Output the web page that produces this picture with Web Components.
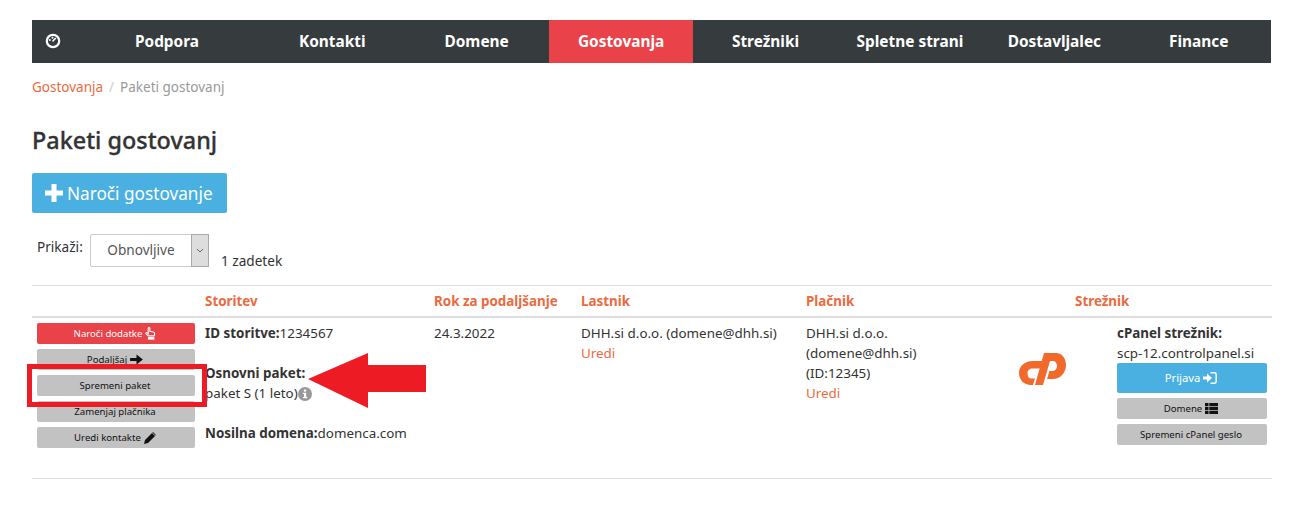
<!DOCTYPE html>
<html lang="sl">
<head>
<meta charset="utf-8">
<title>Paketi gostovanj</title>
<style>
html, body { margin: 0; background: #fff; }
body { font-family: "Noto Sans", "Open Sans", sans-serif; color: #333; position: relative; height: 508px; overflow: hidden; }
.page { padding: 20px 42px 0 32px; }
</style>
</head>
<body>
<div class="page">
  <top-nav></top-nav>
  <bread-crumbs></bread-crumbs>
  <page-title>Paketi gostovanj</page-title>
  <action-bar></action-bar>
  <hosting-table></hosting-table>
</div>
<mark-up></mark-up>

<script>
const ICONS = {
  gauge: '<svg viewBox="0 0 16 16" width="16" height="16"><circle cx="8" cy="8" r="6.2" fill="none" stroke="currentColor" stroke-width="2.2"/><path d="M7.500 8.500 10.800 5" stroke="currentColor" stroke-width="1.500" fill="none"/><circle cx="4.800" cy="7" r="1" fill="currentColor"/><circle cx="7.500" cy="4.700" r="1" fill="currentColor"/></svg>',
  plus: '<svg viewBox="0 0 18 18" width="18" height="18"><path d="M6.500 0h5v6.500H18v5h-6.500V18h-5v-6.500H0v-5h6.500z" fill="currentColor"/></svg>',
  hand: '<svg viewBox="0 0 12 14" width="11" height="13"><path d="M3.500 1.500c0-1.200 1.800-1.200 1.800 0v3l3.800.8c1 .2 1.500.9 1.400 1.800l-.4 2.400H3.500L1.200 7.300c-.7-.9.500-1.900 1.300-1.100l1 1z" fill="none" stroke="currentColor" stroke-width="1.200"/><rect x="3.200" y="10.500" width="7" height="3.200" fill="currentColor"/></svg>',
  arrow: '<svg viewBox="0 0 14 12" width="13" height="11"><path d="M0 4.300h7V.5L14 6l-7 5.500V7.700H0z" fill="currentColor"/></svg>',
  pencil: '<svg viewBox="0 0 12 12" width="12" height="12"><path d="M0 12l1-4L8 1l3 3-7 7zM9 0l3 3-.6.600-3-3z" fill="currentColor"/></svg>',
  login: '<svg viewBox="0 0 14 12" width="14" height="12"><path d="M0 4.500h4V1.500L9 6l-5 4.500v-3H0z" fill="currentColor"/><path d="M7.500.8h4c1 0 1.700.7 1.700 1.700v7c0 1-.7 1.700-1.700 1.700h-4" fill="none" stroke="currentColor" stroke-width="1.500"/></svg>',
  list: '<svg viewBox="0 0 13 11" width="13" height="11"><path d="M0 0h3.500v3.200H0zM4.300 0H13v3.200H4.300zM0 3.900h3.500v3.200H0zM4.300 3.900H13v3.200H4.300zM0 7.800h3.500V11H0zM4.300 7.800H13V11H4.300z" fill="currentColor"/></svg>',
  info: '<svg viewBox="0 0 14 14" width="14" height="14"><circle cx="7" cy="7" r="7" fill="#999"/><rect x="5.900" y="2.500" width="2.300" height="2.100" fill="#fff"/><path d="M5 5.800h3.200v4.200H9.200v1.300H5V10h1V7.100H5z" fill="#fff"/></svg>'
};

class AppIcon extends HTMLElement {
  constructor() {
    super();
    this.attachShadow({ mode: 'open' }).innerHTML = `
      <style>:host { display: inline-flex; vertical-align: middle; } svg { display: block; }</style>
      ${ICONS[this.getAttribute('name')] || ''}`;
  }
}
customElements.define('app-icon', AppIcon);

class TopNav extends HTMLElement {
  constructor() {
    super();
    const items = ['Podpora', 'Kontakti', 'Domene', 'Gostovanja', 'Strežniki', 'Spletne strani', 'Dostavljalec', 'Finance'];
    this.attachShadow({ mode: 'open' }).innerHTML = `
      <style>
      :host { display: grid; grid-template-columns: 42px 186px repeat(7, 1fr); height: 43px; background: #363b3e; color: #fff; font-size: 15.400px; font-weight: 700; }
      a { display: flex; align-items: center; justify-content: center; padding-bottom: 1px; }
      .active { background: #e94249; }
      </style>
      <a><app-icon name="gauge"></app-icon></a>
      ${items.map(t => `<a class="${t === 'Gostovanja' ? 'active' : ''}">${t}</a>`).join('')}`;
  }
}
customElements.define('top-nav', TopNav);

class BreadCrumbs extends HTMLElement {
  constructor() {
    super();
    this.attachShadow({ mode: 'open' }).innerHTML = `
      <style>
      :host { display: flex; gap: 6px; margin-top: 14px; height: 20px; line-height: 20px; font-size: 13.500px; color: #999; }
      a { color: #ec6a3e; }
      i { font-style: normal; color: #ccc; }
      </style>
      <a>Gostovanja</a><i>/</i><span>Paketi gostovanj</span>`;
  }
}
customElements.define('bread-crumbs', BreadCrumbs);

class PageTitle extends HTMLElement {
  constructor() {
    super();
    this.attachShadow({ mode: 'open' }).innerHTML = `
      <style>:host { display: block; margin-top: 26px; height: 34px; line-height: 34px; font-size: 23.400px; font-weight: 500; color: #333; -webkit-text-stroke: .3px #333; }</style>
      <slot></slot>`;
  }
}
customElements.define('page-title', PageTitle);

class AppBtn extends HTMLElement {
  constructor() {
    super();
    this.attachShadow({ mode: 'open' }).innerHTML = `
      <style>
      :host { display: flex; align-items: center; justify-content: center; gap: 3px; height: 21px; padding-right: 2px; box-sizing: border-box; border-radius: 2px; background: #c2c2c2; color: #111; font-size: 9.600px; white-space: nowrap; }
      :host([kind="red"]) { background: #e94249; color: #fff; }
      :host([kind="blue"]) { background: #4ab0e2; color: #fff; height: 30px; font-size: 11.300px; }
      </style>
      <slot></slot>`;
  }
}
customElements.define('app-btn', AppBtn);

class ActionBar extends HTMLElement {
  constructor() {
    super();
    this.attachShadow({ mode: 'open' }).innerHTML = `
      <style>
      :host { display: block; margin-top: 16px; font-size: 13.600px; color: #333; }
      .add { display: flex; align-items: center; gap: 4px; width: 195px; height: 40px; padding-left: 13px; box-sizing: border-box; background: #4ab0e2; border-radius: 2px; color: #fff; font-size: 17.200px; }
      .filter { display: flex; align-items: flex-start; margin-top: 21px; height: 51px; padding-left: 5px; }
      .lbl { margin-top: 3px; width: 53px; }
      .sel { display: flex; width: 117px; height: 31px; border: 1px solid #ccc; border-radius: 2px; color: #555; }
      .val { flex: 1; display: flex; align-items: center; justify-content: center; padding-bottom: 2px; }
      .car { width: 16px; background: #ddd; border: 1px solid #aaa; display: flex; align-items: center; justify-content: center; margin: -1px -1px -1px 0; }
      .count { margin: 17px 0 0 12px; }
      </style>
      <div class="add"><app-icon name="plus"></app-icon>Naroči gostovanje</div>
      <div class="filter">
        <span class="lbl">Prikaži:</span>
        <div class="sel"><span class="val">Obnovljive</span><span class="car"><svg width="8" height="5" viewBox="0 0 8 5"><path d="M1 1l3 3 3-3" fill="none" stroke="#666"/></svg></span></div>
        <span class="count">1 zadetek</span>
      </div>`;
  }
}
customElements.define('action-bar', ActionBar);

class HostingTable extends HTMLElement {
  constructor() {
    super();
    this.attachShadow({ mode: 'open' }).innerHTML = `
      <style>
      :host { display: block; font-size: 13.400px; line-height: 20px; color: #333; width: 1240px; }
      .row { display: grid; grid-template-columns: 168px 229px 147px 225px 210px 101px 160px; }
      .head { border-top: 1px solid #ddd; border-bottom: 2px solid #ddd; height: 30px; align-items: center; color: #ec6a3e; font-weight: 700; }
      .head > div { padding-left: 5px; }
      .head .srv { grid-column: 6 / 8; padding-left: 64px; }
      .body { border-bottom: 1px solid #ddd; height: 160px; }
      .body > div { padding: 5px; }
      .stack { display: flex; flex-direction: column; gap: 5px; }
      .stack.act { padding-top: 5px; }
      .srv-box { display: flex; flex-direction: column; }
      p { margin: 0; }
      .gap { margin-top: 20px; }
      b { font-weight: 700; }
      a { color: #ec6a3e; }
      .logo { padding: 35px 0 0 8px !important; }
      </style>
      <div class="row head">
        <div></div><div>Storitev</div><div>Rok za podaljšanje</div><div>Lastnik</div><div>Plačnik</div><div class="srv">Strežnik</div>
      </div>
      <div class="row body">
        <div class="stack act">
          <app-btn kind="red">Naroči dodatke <app-icon name="hand"></app-icon></app-btn>
          <app-btn>Podaljšaj <app-icon name="arrow"></app-icon></app-btn>
          <app-btn>Spremeni paket</app-btn>
          <app-btn>Zamenjaj plačnika</app-btn>
          <app-btn>Uredi kontakte <app-icon name="pencil"></app-icon></app-btn>
        </div>
        <div>
          <p><b>ID storitve:</b>1234567</p>
          <p class="gap"><b>Osnovni paket:</b></p>
          <p>paket S (1 leto)<app-icon name="info"></app-icon></p>
          <p class="gap"><b>Nosilna domena:</b>domenca.com</p>
        </div>
        <div>24.3.2022</div>
        <div><p>DHH.si d.o.o. (domene@dhh.si)</p><a>Uredi</a></div>
        <div><p>DHH.si d.o.o.</p><p>(domene@dhh.si)</p><p>(ID:12345)</p><a>Uredi</a></div>
        <div class="logo"><svg width="47" height="32" viewBox="0 0 47 32" style="display:block"><path fill="#f26a2b" d="M24 8H14C5 8 0 14 0 20c0 7 5 12 12 12h2l2-6.500h-3.500c-2.500 0-4-2-4-5 0-3 2-5 5-5H22z"/><path fill="#f26a2b" d="M25 0h12c6 0 10 5 10 12 0 8-6 14-13 14h-6l2.500-8H33c3 0 5-2 5-5 0-3-1.500-5-4-5h-3L24 32h-8z"/></svg></div>
        <div class="srv-box">
          <p><b>cPanel strežnik:</b></p><p>scp-12.controlpanel.si</p>
          <div class="stack">
            <app-btn kind="blue">Prijava <app-icon name="login"></app-icon></app-btn>
            <app-btn>Domene <app-icon name="list"></app-icon></app-btn>
            <app-btn>Spremeni cPanel geslo</app-btn>
          </div>
        </div>
      </div>`;
  }
}
customElements.define('hosting-table', HostingTable);

class MarkUp extends HTMLElement {
  constructor() {
    super();
    this.attachShadow({ mode: 'open' }).innerHTML = `
      <style>
      :host { position: absolute; left: 0; top: 0; width: 1313px; height: 508px; pointer-events: none; display: block; }
      svg { display: block; }
      </style>
      <svg width="1313" height="508">
        <rect x="29.500" y="366.500" width="175" height="38" fill="none" stroke="#ed1c24" stroke-width="5"/>
        <path d="M308 379 368 353V365H426V392H368V408Z" fill="#ed1c24"/>
      </svg>`;
  }
}
customElements.define('mark-up', MarkUp);
</script>
</body>
</html>
